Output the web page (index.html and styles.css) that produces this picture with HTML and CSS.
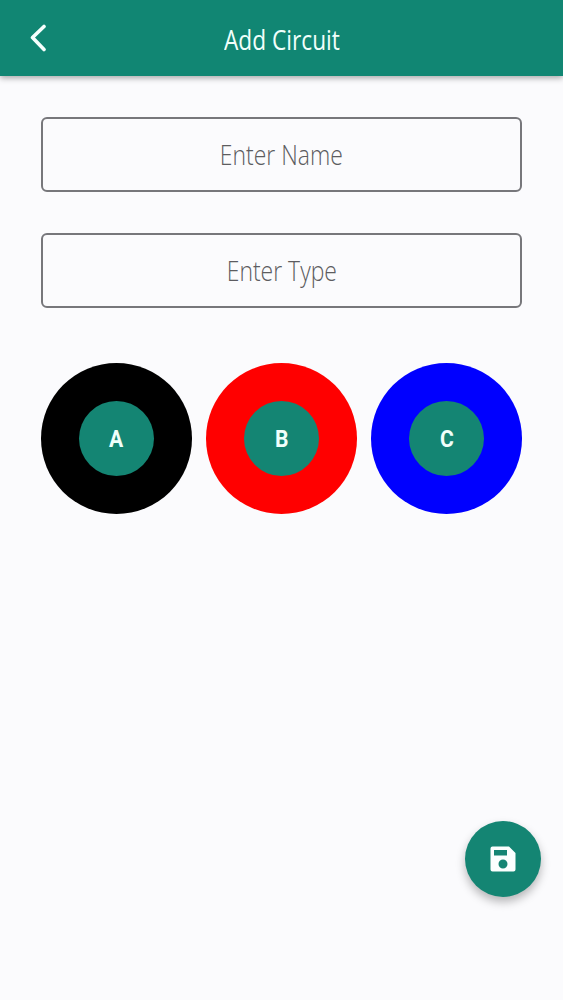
FILE: index.html
```html
<!DOCTYPE html>
<html>
<head>
<meta charset="utf-8">
<title>Add Circuit</title>
<link rel="stylesheet" href="styles.css">
</head>
<body>
<div class="screen">
	<div class="header">
		<svg class="backIcon" width="20" height="30" viewBox="0 0 20 30">
			<path d="M16 2.500 L4.500 13.500 L16 25.500" fill="none" stroke="#f6fffd" stroke-width="3.600" stroke-linecap="round" stroke-linejoin="round"/>
		</svg>
		<div class="title">Add Circuit</div>
	</div>
	<div class="form">
		<div class="field"><span class="hint">Enter Name</span></div>
		<div class="field"><span class="hint">Enter Type</span></div>
		<div class="circles">
			<div class="circle black"><div class="inner"><span class="letter">A</span></div></div>
			<div class="circle red"><div class="inner"><span class="letter">B</span></div></div>
			<div class="circle blue"><div class="inner"><span class="letter">C</span></div></div>
		</div>
	</div>
	<div class="fab">
		<svg width="28" height="28" viewBox="0 0 28 28">
			<path fill-rule="evenodd" fill="#fbfffe" d="M3.500 1.500 H20 L26.500 8 V24.500 A2 2 0 0 1 24.500 26.500 H3.500 A2 2 0 0 1 1.500 24.500 V3.500 A2 2 0 0 1 3.500 1.500 Z M5 5 V10.500 H18 V5 Z M14 14.500 A4.500 4.500 0 1 0 14 23.500 A4.500 4.500 0 1 0 14 14.500 Z"/>
		</svg>
	</div>
</div>
</body>
</html>
```

FILE: styles.css
```css
body
{
	margin: 0;
	background-color: #fbfbfd;
	font-family: "Open Sans", sans-serif;
}
.screen
{
	position: relative;
	width: 563px;
	height: 1000px;
	overflow: hidden;
}
.header
{
	position: relative;
	display: flex;
	align-items: center;
	justify-content: center;
	height: 76px;
	padding-top: 2px;
	box-sizing: border-box;
	background-color: #118673;
	box-shadow: 0 2px 6px rgba(0, 0, 0, 0.35);
}
.backIcon
{
	position: absolute;
	left: 28px;
	top: 24px;
}
.title
{
	font-size: 27px;
	color: #f0fffb;
	transform: scaleX(0.84);
}
.form
{
	display: flex;
	flex-direction: column;
	gap: 41px;
	padding: 41px 41px 0;
}
.field
{
	display: flex;
	align-items: center;
	justify-content: center;
	height: 75px;
	box-sizing: border-box;
	border: 2px solid #77777b;
	border-radius: 6px;
}
.hint
{
	font-size: 27px;
	font-weight: 300;
	color: #5c5c60;
	transform: scaleX(0.85);
}
.circles
{
	display: flex;
	justify-content: space-between;
	margin-top: 14px;
}
.circle
{
	display: flex;
	align-items: center;
	justify-content: center;
	width: 151px;
	height: 151px;
	border-radius: 50%;
}
.black
{
	background-color: #000000;
}
.red
{
	background-color: #ff0000;
}
.blue
{
	background-color: #0000ff;
}
.inner
{
	display: flex;
	align-items: center;
	justify-content: center;
	width: 75px;
	height: 75px;
	border-radius: 50%;
	background-color: #148573;
}
.letter
{
	font-family: Roboto, sans-serif;
	font-weight: 700;
	font-size: 24px;
	color: #f0fffb;
	transform: scaleX(0.88);
}
.fab
{
	position: absolute;
	left: 465px;
	top: 821px;
	display: flex;
	align-items: center;
	justify-content: center;
	width: 76px;
	height: 76px;
	border-radius: 50%;
	background-color: #148573;
	box-shadow: 0 5px 10px rgba(0, 0, 0, 0.28);
}
```
